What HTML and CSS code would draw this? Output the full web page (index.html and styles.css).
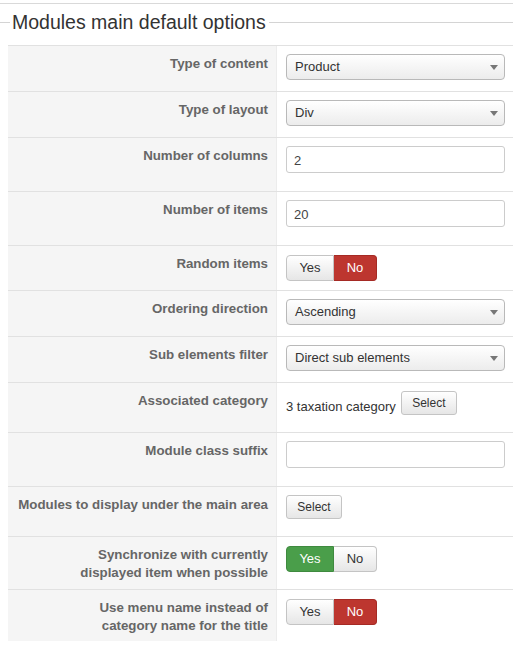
FILE: index.html
```html
<!DOCTYPE html>
<html>
<head>
<meta charset="utf-8">
<link rel="stylesheet" href="styles.css">
</head>
<body>
<div class="page">
  <div class="fieldset">
    <div class="legend"><span class="line-l"></span><span class="legend-text">Modules main default options</span><span class="line-r"></span></div>
    <div class="table">
      <div class="row h46">
        <div class="label">Type of content</div>
        <div class="ctl"><div class="select">Product<span class="caret"></span></div></div>
      </div>
      <div class="row h46">
        <div class="label">Type of layout</div>
        <div class="ctl"><div class="select">Div<span class="caret"></span></div></div>
      </div>
      <div class="row h54">
        <div class="label">Number of columns</div>
        <div class="ctl"><div class="input">2</div></div>
      </div>
      <div class="row h54">
        <div class="label">Number of items</div>
        <div class="ctl"><div class="input">20</div></div>
      </div>
      <div class="row h45">
        <div class="label">Random items</div>
        <div class="ctl tg"><div class="toggle"><span class="btn yes">Yes</span><span class="btn no active-no">No</span></div></div>
      </div>
      <div class="row h46">
        <div class="label">Ordering direction</div>
        <div class="ctl"><div class="select">Ascending<span class="caret"></span></div></div>
      </div>
      <div class="row h46">
        <div class="label">Sub elements filter</div>
        <div class="ctl"><div class="select">Direct sub elements<span class="caret"></span></div></div>
      </div>
      <div class="row h50">
        <div class="label">Associated category</div>
        <div class="ctl inline"><span class="cat">3 taxation category</span><span class="sbtn">Select</span></div>
      </div>
      <div class="row h54">
        <div class="label">Module class suffix</div>
        <div class="ctl"><div class="input"></div></div>
      </div>
      <div class="row h50">
        <div class="label nowrap">Modules to display under the main area</div>
        <div class="ctl"><span class="sbtn">Select</span></div>
      </div>
      <div class="row h53">
        <div class="label">Synchronize with currently displayed item when possible</div>
        <div class="ctl tg"><div class="toggle"><span class="btn yes active-yes">Yes</span><span class="btn no">No</span></div></div>
      </div>
      <div class="row h52 last">
        <div class="label">Use menu name instead of category name for the title</div>
        <div class="ctl tg"><div class="toggle"><span class="btn yes">Yes</span><span class="btn no active-no">No</span></div></div>
      </div>
    </div>
  </div>
</div>
</body>
</html>
```

FILE: styles.css
```css
* { box-sizing: border-box; }
html, body { margin: 0; padding: 0; background: #fff; }
body { font-family: "Liberation Sans", Arial, sans-serif; font-size: 13px; color: #333; }
.page { border-top: 1px solid #d9d9d9; margin-top: 3px; width: 513px; overflow: hidden; }
.fieldset { padding-top: 4px; }
.legend { display: flex; align-items: center; height: 28px; }
.line-l { width: 10px; height: 1px; background: #d4d4d4; }
.line-r { flex: 1; height: 1px; background: #d4d4d4; margin-left: 3px; }
.legend-text { font-size: 19.5px; color: #333; padding-left: 2px; line-height: 28px; }
.table { margin-left: 8px; margin-top: 9px; width: 505px; }
.row { display: flex; border-top: 1px solid #e1e1e1; }
.h45 { height: 45px; }
.h46 { height: 46px; }
.h50 { height: 50px; }
.h52 { height: 52px; }
.h53 { height: 53px; }
.h54 { height: 54px; }
.label { width: 269px; flex: none; background: #f5f5f5; border-right: 1px solid #ececec; text-align: right; font-weight: bold; font-size: 13.3px; color: #666; padding: 9px 8px 0 60px; line-height: 18px; }
.label.nowrap { white-space: nowrap; padding-left: 0; }
.row.last .label { border-bottom: 1px solid #e1e1e1; height: 52px; }
.ctl { flex: 1; padding: 8px 0 0 9px; }
.tg { padding-top: 9px; }
.select { position: relative; width: 219px; height: 26px; border: 1px solid #b9b9b9; border-radius: 4px; background: linear-gradient(#fff, #ececec); padding: 0 0 0 8px; line-height: 24px; color: #333; }
.caret { position: absolute; right: 6px; top: 10px; width: 0; height: 0; border-left: 4px solid transparent; border-right: 4px solid transparent; border-top: 5px solid #777; }
.input { width: 219px; height: 27px; border: 1px solid #ccc; border-radius: 3px; background: #fff; padding-left: 7px; line-height: 27px; color: #444; }
.toggle { display: inline-flex; height: 26px; }
.btn { display: inline-block; height: 26px; line-height: 24px; text-align: center; border: 1px solid #c4c4c4; background: linear-gradient(#fff, #e6e6e6); color: #333; }
.btn.yes { width: 48px; border-radius: 4px 0 0 4px; }
.btn.no { width: 43px; border-radius: 0 4px 4px 0; border-left: none; }
.btn.active-no { background: #bd362f; border-color: #a52a24; color: #fff; }
.btn.active-yes { background: #4a9e4a; border-color: #3f8a3f; color: #fff; }
.inline { display: flex; align-items: flex-start; padding-top: 8px; }
.cat { line-height: 18px; margin-top: 7px; margin-right: 5px; color: #333; }
.sbtn { display: inline-block; width: 56px; height: 24px; line-height: 22px; text-align: center; font-size: 12px; border: 1px solid #c4c4c4; border-radius: 3px; background: linear-gradient(#fff, #e6e6e6); color: #333; }
```
